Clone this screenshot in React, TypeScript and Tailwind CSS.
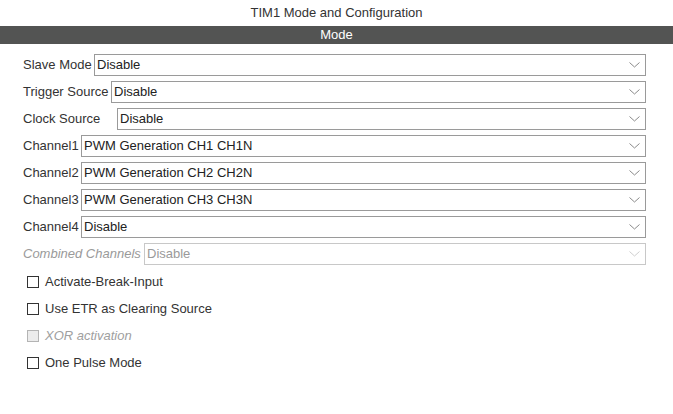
import React from "react";

const rows: { label: string; value: string; w: string; disabled?: boolean }[] = [
  { label: "Slave Mode", value: "Disable", w: "w-[71px]" },
  { label: "Trigger Source", value: "Disable", w: "w-[88px]" },
  { label: "Clock Source", value: "Disable", w: "w-[94px]" },
  { label: "Channel1", value: "PWM Generation CH1 CH1N", w: "w-[58px]" },
  { label: "Channel2", value: "PWM Generation CH2 CH2N", w: "w-[58px]" },
  { label: "Channel3", value: "PWM Generation CH3 CH3N", w: "w-[58px]" },
  { label: "Channel4", value: "Disable", w: "w-[58px]" },
  { label: "Combined Channels", value: "Disable", w: "w-[121px]", disabled: true },
];

const checks: { label: string; disabled?: boolean }[] = [
  { label: "Activate-Break-Input" },
  { label: "Use ETR as Clearing Source" },
  { label: "XOR activation", disabled: true },
  { label: "One Pulse Mode" },
];

function Chevron({ disabled }: { disabled?: boolean }) {
  return (
    <svg width="11" height="6" viewBox="0 0 11 6" className="shrink-0">
      <path
        d="M0.5 0.5 L5.5 5 L10.5 0.5"
        fill="none"
        stroke={disabled ? "#cfcfcf" : "#8a8a8a"}
        strokeWidth="1"
      />
    </svg>
  );
}

export default function App() {
  return (
    <div
      className="w-[673px] h-[414px] bg-white text-[13px] text-[#333333]"
      style={{ fontFamily: '"Liberation Sans", Arial, sans-serif' }}
    >
      <div className="h-[26px] flex items-center justify-center pt-[0px] text-[#333333]">
        TIM1 Mode and Configuration
      </div>
      <div className="h-[18px] bg-[#535453] text-white flex items-center justify-center">
        Mode
      </div>
      <div className="pl-[23px] pr-[27px] pt-[10px] flex flex-col gap-[5px]">
        {rows.map((r) => (
          <div key={r.label} className="flex items-center h-[22px]">
            <div
              className={`${r.w} shrink-0 whitespace-nowrap ${
                r.disabled ? "italic text-[#9a9a9a]" : "text-[#333333]"
              }`}
            >
              {r.label}
            </div>
            <div
              className={`flex-1 h-[22px] border flex items-center justify-between pl-[2px] pr-[5px] ${
                r.disabled ? "border-[#c8c8c8] text-[#9a9a9a]" : "border-[#9a9a9a] text-[#222222]"
              }`}
            >
              <span className="whitespace-nowrap">{r.value}</span>
              <Chevron disabled={r.disabled} />
            </div>
          </div>
        ))}
      </div>
      <div className="pl-[27px] mt-[3px] flex flex-col">
        {checks.map((c) => (
          <div key={c.label} className="h-[27px] flex items-center">
            <div
              className={`w-[12px] h-[12px] border shrink-0 ${
                c.disabled ? "border-[#b4b4b4] bg-[#ececec]" : "border-[#333333] bg-white"
              }`}
            />
            <span
              className={`ml-[6px] ${c.disabled ? "italic text-[#a0a0a0]" : "text-[#333333]"}`}
            >
              {c.label}
            </span>
          </div>
        ))}
      </div>
    </div>
  );
}
